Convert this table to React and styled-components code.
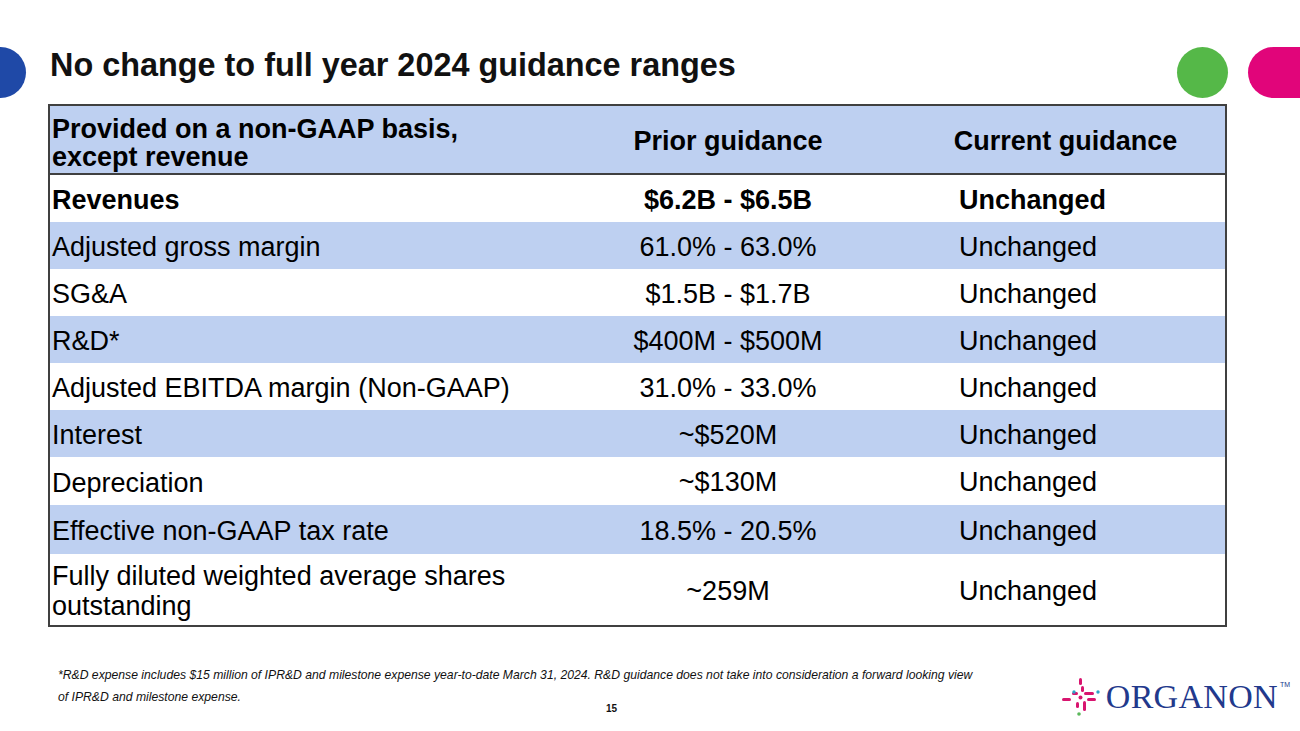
import React from "react";
import styled, { createGlobalStyle } from "styled-components";

const Global = createGlobalStyle`
  html, body { margin: 0; padding: 0; background: #ffffff; }
  body { font-family: "Liberation Sans", Arial, sans-serif; }
`;

const Page = styled.div`
  width: 1300px;
  height: 731px;
  overflow: hidden;
  display: flex;
  flex-direction: column;
  background: #fff;
`;

const TopBar = styled.div`
  display: flex;
  align-items: flex-start;
  padding-top: 47px;
  height: 51px;
`;

const HalfDisc = styled.div`
  width: 26px;
  height: 51px;
  background: #1f49a7;
  border-radius: 0 25.5px 25.5px 0;
  flex: none;
`;

const Title = styled.h1`
  margin: 0 0 0 24px;
  font-family: "Liberation Sans", Arial, sans-serif;
  font-weight: 700;
  font-size: 32.4px;
  line-height: 36px;
  color: #111;
  flex: 1;
`;

const Dot = styled.div`
  width: 51px;
  height: 51px;
  border-radius: 50%;
  background: #55b848;
  flex: none;
`;

const Pill = styled.div`
  width: 52px;
  height: 51px;
  margin-left: 20px;
  background: #e1057a;
  border-radius: 25.5px 0 0 25.5px;
  flex: none;
`;

const TableBox = styled.div`
  margin: 6px 0 0 48px;
  width: 1179px;
  box-sizing: border-box;
  border: 2px solid #404040;
  font-family: "Liberation Sans", Arial, sans-serif;
  font-size: 27px;
  color: #000;
`;

const Row = styled.div`
  display: grid;
  grid-template-columns: 470px 416px 1fr;
  box-sizing: border-box;
  height: ${(p) => p.$h}px;
  padding-top: ${(p) => (p.$head ? 4 : 3)}px;
  background: ${(p) => (p.$blue ? "#bed0f1" : "#ffffff")};
  border-bottom: ${(p) => (p.$head ? "2px solid #404040" : "none")};
  font-weight: ${(p) => (p.$bold ? 700 : 400)};
`;

const Label = styled.div`
  display: flex;
  align-items: center;
  padding: ${(p) => (p.$shift ? "3px 0 0 2px" : "0 0 0 2px")};
  line-height: ${(p) => (p.$head ? 28 : 30)}px;
`;

const Center = styled.div`
  display: flex;
  align-items: center;
  justify-content: center;
`;

const Current = styled.div`
  display: flex;
  align-items: center;
  justify-content: ${(p) => (p.$head ? "center" : "flex-start")};
  padding: ${(p) => (p.$head ? "0 30px 0 0" : "0 0 0 23px")};
`;

const Bottom = styled.div`
  display: flex;
  justify-content: space-between;
  align-items: flex-start;
  margin-top: 37px;
`;

const Notes = styled.div`
  padding-left: 58px;
  display: flex;
  flex-direction: column;
`;

const Footnote = styled.p`
  margin: 0;
  font-family: "Liberation Sans", Arial, sans-serif;
  font-style: italic;
  font-size: 12.2px;
  line-height: 22px;
  color: #111;
`;

const PageNum = styled.div`
  margin: -5px 0 0 548px;
  font-family: "Liberation Sans", Arial, sans-serif;
  font-weight: 700;
  font-size: 10px;
  line-height: 12px;
  color: #111;
`;

const Logo = styled.div`
  display: flex;
  align-items: center;
  margin: 11px 10px 0 0;
`;

const Word = styled.span`
  font-family: "Liberation Serif", "Times New Roman", serif;
  font-size: 34px;
  letter-spacing: 0.3px;
  color: #22398c;
  margin-left: 3px;
  line-height: 40px;
`;

const TM = styled.sup`
  font-family: "Liberation Sans", Arial, sans-serif;
  font-size: 7px;
  color: #22398c;
  align-self: flex-start;
  margin: 6px 0 0 2px;
`;

const LogoMark = () => (
  <svg width="44" height="44" viewBox="0 0 44 44">
    <g fill="#d8156f">
      <rect x="20" y="3" width="3" height="7" rx="1.5" />
      <rect x="22" y="11" width="3" height="6" rx="1.5" />
      <rect x="3" y="23" width="9" height="3" rx="1.5" />
      <rect x="13" y="17" width="6" height="3" rx="1.5" />
      <rect x="25" y="17" width="10" height="3" rx="1.5" />
      <rect x="28" y="23" width="9" height="3" rx="1.5" />
      <rect x="24" y="26" width="3" height="10" rx="1.5" />
      <rect x="17" y="27" width="3" height="6" rx="1.5" />
      <circle cx="21.5" cy="22.5" r="2" />
    </g>
    <circle cx="15" cy="17" r="1.7" fill="#2ba4c8" />
    <circle cx="39" cy="17" r="1.7" fill="#2ba4c8" />
    <circle cx="20" cy="39" r="1.8" fill="#5cb85c" />
  </svg>
);

const rows = [
  { label: "Revenues", prior: "$6.2B - $6.5B", h: 47, bold: true },
  { label: "Adjusted gross margin", prior: "61.0% - 63.0%", h: 47, blue: true },
  { label: "SG&A", prior: "$1.5B - $1.7B", h: 47 },
  { label: "R&D*", prior: "$400M - $500M", h: 47, blue: true },
  { label: "Adjusted EBITDA margin (Non-GAAP)", prior: "31.0% - 33.0%", h: 47 },
  { label: "Interest", prior: "~$520M", h: 47, blue: true },
  { label: "Depreciation", prior: "~$130M", h: 48 },
  { label: "Effective non-GAAP tax rate", prior: "18.5% - 20.5%", h: 49, blue: true },
  {
    label: (
      <>
        Fully diluted weighted average shares
        <br />
        outstanding
      </>
    ),
    prior: "~259M",
    h: 71,
  },
];

export default function App() {
  return (
    <Page>
      <Global />
      <TopBar>
        <HalfDisc />
        <Title>No change to full year 2024 guidance ranges</Title>
        <Dot />
        <Pill />
      </TopBar>
      <TableBox>
        <Row $h={69} $blue $head $bold>
          <Label $head $shift>
            <span>
              Provided on a non-GAAP basis,
              <br />
              except revenue
            </span>
          </Label>
          <Center>Prior guidance</Center>
          <Current $head>Current guidance</Current>
        </Row>
        {rows.map((r, i) => (
          <Row key={i} $h={r.h} $blue={r.blue} $bold={r.bold}>
            <Label>
              <span>{r.label}</span>
            </Label>
            <Center>{r.prior}</Center>
            <Current>Unchanged</Current>
          </Row>
        ))}
      </TableBox>
      <Bottom>
        <Notes>
          <Footnote>
            *R&amp;D expense includes $15 million of IPR&amp;D and milestone expense year-to-date March 31, 2024. R&amp;D guidance does not take into consideration a forward looking view
            <br />
            of IPR&amp;D and milestone expense.
          </Footnote>
          <PageNum>15</PageNum>
        </Notes>
        <Logo>
          <LogoMark />
          <Word>ORGANON</Word>
          <TM>TM</TM>
        </Logo>
      </Bottom>
    </Page>
  );
}
